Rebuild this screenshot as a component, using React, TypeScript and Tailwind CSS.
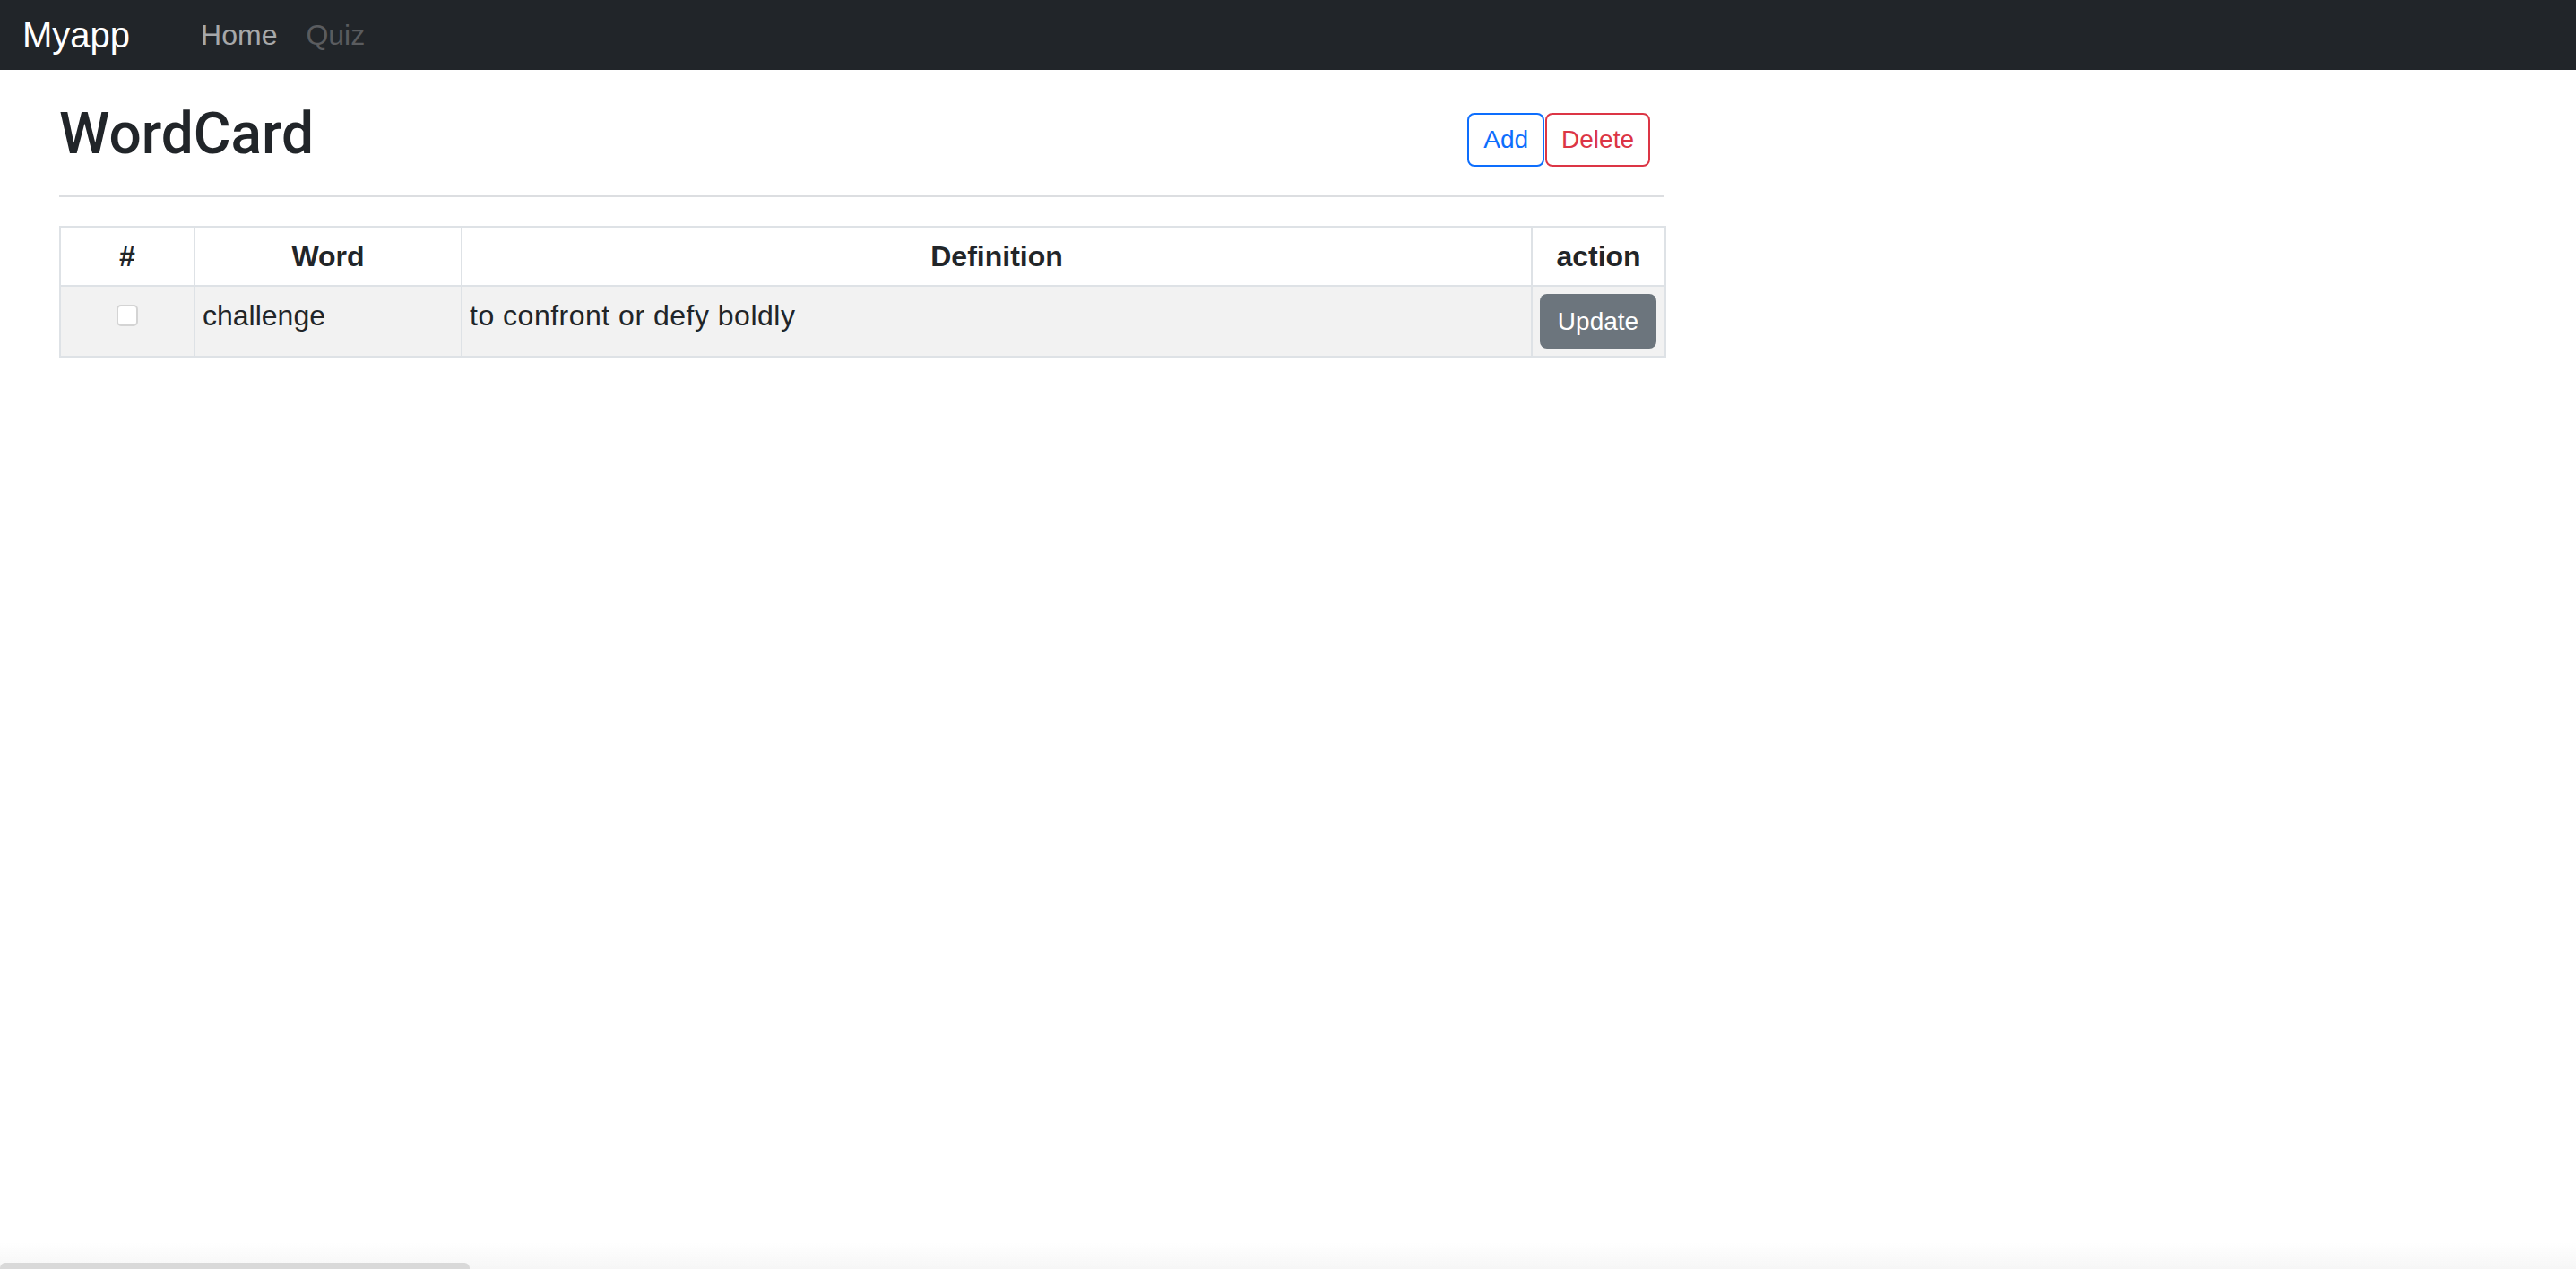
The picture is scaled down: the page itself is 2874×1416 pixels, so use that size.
import React from "react";

const font = { fontFamily: '"Liberation Sans", Arial, sans-serif' };

function Navbar() {
  return (
    <nav className="flex h-[78px] items-center bg-[#212529] pl-[25px]">
      <a className="text-[40px] leading-[40px] text-white">Myapp</a>
      <ul className="ml-[63px] flex items-center">
        <li>
          <a className="block px-[16px] text-[32px] leading-[32px] text-[#a6a8aa]">Home</a>
        </li>
        <li>
          <a className="block px-[16px] text-[32px] leading-[32px] text-[#5a5c5f]">Quiz</a>
        </li>
      </ul>
    </nav>
  );
}

function WordTable() {
  const rows = [{ word: "challenge", definition: "to confront or defy boldly" }];
  return (
    <table className="mt-[32px] w-[1791px] table-fixed border-collapse text-[32px] leading-[48px] text-[#212529]">
      <thead>
        <tr>
          <th className="w-[150px] border-2 border-[#dee2e6] bg-white py-[8px] font-bold">#</th>
          <th className="w-[298px] border-2 border-[#dee2e6] bg-white py-[8px] font-bold">Word</th>
          <th className="w-[1194px] border-2 border-[#dee2e6] bg-white py-[8px] font-bold">Definition</th>
          <th className="w-[149px] border-2 border-[#dee2e6] bg-white py-[8px] font-bold">action</th>
        </tr>
      </thead>
      <tbody>
        {rows.map((r) => (
          <tr key={r.word} className="bg-[#f2f2f2]">
            <td className="border-2 border-[#dee2e6] p-[8px] align-top">
              <input
                type="checkbox"
                className="mx-auto mt-[12px] block h-[24px] w-[24px] appearance-none rounded-[5px] border-2 border-[#d4d4d4] bg-white"
              />
            </td>
            <td className="border-2 border-[#dee2e6] px-[8px] py-[8px] align-top">{r.word}</td>
            <td className="border-2 border-[#dee2e6] px-[8px] py-[8px] align-top tracking-[0.5px]">{r.definition}</td>
            <td className="border-2 border-[#dee2e6] p-[8px] align-top">
              <button className="h-[61px] w-[130px] rounded-[8px] bg-[#6c757d] text-[28px] leading-[42px] text-white">
                Update
              </button>
            </td>
          </tr>
        ))}
      </tbody>
    </table>
  );
}

export default function App() {
  return (
    <div className="relative min-h-[1416px] bg-white text-[#212529]" style={font}>
      <Navbar />
      <main className="ml-[66px] w-[1791px]">
        <div className="mt-[33px] flex items-start justify-between">
          <h2 className="h-[77px] font-['Roboto',sans-serif] text-[64px] leading-[77px] font-medium">WordCard</h2>
          <div className="mr-[16px] mt-[15px] flex gap-[1px]">
            <button className="h-[60px] rounded-[8px] border-2 border-[#0d6efd] px-[16px] text-[28px] leading-[42px] text-[#0d6efd]">
              Add
            </button>
            <button className="h-[60px] rounded-[8px] border-2 border-[#dc3545] px-[16px] text-[28px] leading-[42px] text-[#dc3545]">
              Delete
            </button>
          </div>
        </div>
        <hr className="mt-[30px] border-t-2 border-[#dcdee1]" />
        <WordTable />
      </main>
      {/* overlay scrollbar */}
      <div className="fixed bottom-0 left-0 right-0 h-[30px] bg-gradient-to-b from-transparent to-[#f6f6f6]">
        <div className="absolute bottom-0 left-0 h-[7px] w-[524px] rounded-t-[6px] bg-[#d9d9d9]" />
      </div>
    </div>
  );
}
